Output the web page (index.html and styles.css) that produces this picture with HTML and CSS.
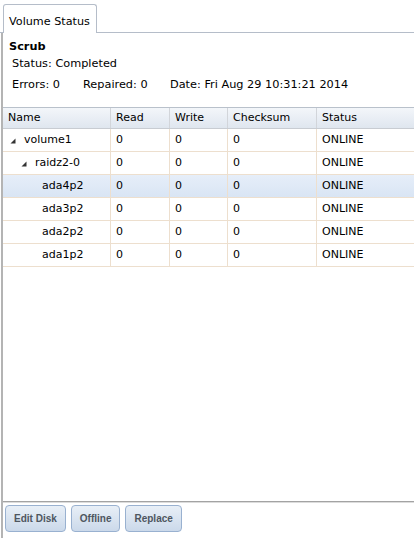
FILE: index.html
```html
<!DOCTYPE html>
<html>
<head>
<meta charset="utf-8">
<link rel="stylesheet" href="styles.css">
</head>
<body>
<div class="app">
  <div class="tabbar">
    <div class="tab">Volume Status</div>
  </div>
  <div class="panel">
    <div class="info">
      <div class="title">Scrub</div>
      <div class="line">Status: Completed</div>
      <div class="line stats">
        <span class="errors">Errors: 0</span>
        <span class="repaired">Repaired: 0</span>
        <span>Date: Fri Aug 29 10:31:21 2014</span>
      </div>
    </div>
    <div class="grid">
      <div class="row head">
        <div class="c name">Name</div>
        <div class="c read">Read</div>
        <div class="c write">Write</div>
        <div class="c chk">Checksum</div>
        <div class="c status">Status</div>
      </div>
      <div class="row">
        <div class="c name lvl0"><svg class="arr" width="6" height="6" viewBox="0 0 6 6"><polygon points="5.5,0.5 5.5,5.5 0.5,5.5"/></svg>volume1</div>
        <div class="c read">0</div><div class="c write">0</div><div class="c chk">0</div><div class="c status">ONLINE</div>
      </div>
      <div class="row">
        <div class="c name lvl1"><svg class="arr" width="6" height="6" viewBox="0 0 6 6"><polygon points="5.5,0.5 5.5,5.5 0.5,5.5"/></svg>raidz2-0</div>
        <div class="c read">0</div><div class="c write">0</div><div class="c chk">0</div><div class="c status">ONLINE</div>
      </div>
      <div class="row sel">
        <div class="c name lvl2">ada4p2</div>
        <div class="c read">0</div><div class="c write">0</div><div class="c chk">0</div><div class="c status">ONLINE</div>
      </div>
      <div class="row">
        <div class="c name lvl2">ada3p2</div>
        <div class="c read">0</div><div class="c write">0</div><div class="c chk">0</div><div class="c status">ONLINE</div>
      </div>
      <div class="row">
        <div class="c name lvl2">ada2p2</div>
        <div class="c read">0</div><div class="c write">0</div><div class="c chk">0</div><div class="c status">ONLINE</div>
      </div>
      <div class="row">
        <div class="c name lvl2">ada1p2</div>
        <div class="c read">0</div><div class="c write">0</div><div class="c chk">0</div><div class="c status">ONLINE</div>
      </div>
    </div>
    <div class="spacer"></div>
    <div class="toolbar">
      <button class="btn">Edit Disk</button>
      <button class="btn">Offline</button>
      <button class="btn">Replace</button>
    </div>
  </div>
</div>
</body>
</html>
```
FILE: styles.css
```css
html, body {
  margin: 0;
  padding: 0;
  background: #fff;
  overflow: hidden;
}
body {
  font-family: "DejaVu Sans", Verdana, sans-serif;
  font-size: 11px;
  color: #000;
}
.app {
  width: 414px;
  height: 538px;
  display: flex;
  flex-direction: column;
  overflow: hidden;
}
.tabbar {
  height: 32px;
  border-bottom: 1px solid #b5bdc9;
  display: flex;
  align-items: flex-end;
  padding-left: 3px;
  flex-shrink: 0;
}
.tab {
  width: 87px;
  height: 28px;
  border: 1px solid #b5bdc9;
  border-bottom: none;
  border-radius: 3px 3px 0 0;
  background: #fff;
  margin-bottom: -1px;
  padding-left: 5px;
  font-size: 11.2px;
  line-height: 33px;
  box-sizing: content-box;
}
.panel {
  flex: 1;
  margin-left: 1px;
  border-left: 2px solid #b4b4b4;
  display: flex;
  flex-direction: column;
  min-height: 0;
}
.info {
  padding: 7px 0 0 6px;
  height: 67px;
  flex-shrink: 0;
  font-size: 11.3px;
}
.title {
  font-weight: bold;
  line-height: 14px;
  height: 14px;
}
.line {
  padding-left: 3px;
  line-height: 14px;
  margin-top: 3px;
}
.stats {
  margin-top: 7px;
  display: flex;
}
.errors { width: 71px; }
.repaired { width: 87px; }
.grid {
  width: 440px;
  flex-shrink: 0;
  border-top: 1px solid #b9c1cb;
}
.row {
  display: flex;
  height: 22px;
  border-bottom: 1px solid #eddfce;
}
.row.head {
  height: 20px;
  background: linear-gradient(#f3f6fa, #dfe6ef);
  border-bottom: 1px solid #c8ccd2;
}
.row.sel {
  background: linear-gradient(#e6eef9, #d9e5f4);
}
.c {
  box-sizing: border-box;
  padding-left: 5px;
  line-height: 22px;
  white-space: nowrap;
  border-right: 1px solid #eddfce;
  display: flex;
  align-items: center;
}
.head .c {
  line-height: 20px;
  border-right: 1px solid #d2d5da;
}
.name { width: 108px; }
.read { width: 59px; }
.write { width: 58px; }
.chk { width: 89px; }
.status { width: 126px; }
.lvl0 { padding-left: 7px; }
.lvl1 { padding-left: 18px; }
.lvl2 { padding-left: 39px; }
.arr {
  fill: #333;
  margin-right: 8px;
  margin-top: 1px;
}
.spacer { flex: 1; }
.toolbar {
  border-top: 1px solid #a3a3a3;
  box-shadow: inset 0 1px 0 #dcdcdc;
  height: 37px;
  padding: 3px 0 0 2px;
  box-sizing: border-box;
  display: flex;
  gap: 5px;
  align-items: flex-start;
  flex-shrink: 0;
}
.btn {
  font-family: "Liberation Sans", Arial, sans-serif;
  font-size: 10px;
  font-weight: bold;
  color: #4e5660;
  height: 27px;
  padding: 0 8px;
  border: 1px solid #99b1d0;
  border-radius: 4px;
  background: linear-gradient(#e8eff7, #cbd9ea);
  margin: 0;
}
```
